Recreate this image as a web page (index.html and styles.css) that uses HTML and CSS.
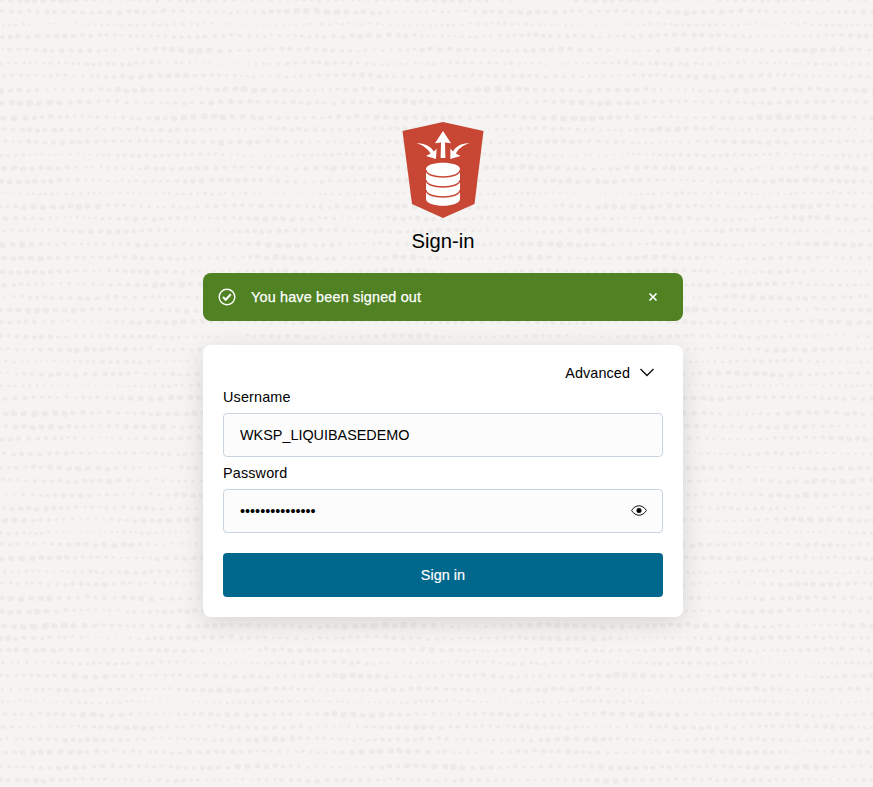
FILE: index.html
```html
<!DOCTYPE html>
<html lang="en">
<head>
<meta charset="utf-8">
<title>Sign-in</title>
<link rel="stylesheet" href="styles.css">
</head>
<body>
<svg class="texture" id="texture" width="873" height="787" aria-hidden="true"></svg>
<main class="login">
  <header class="brand">
    <svg class="logo" width="82" height="96" viewBox="0 0 82 96" aria-hidden="true">
      <path fill="#c74634" d="M41 0 81.5 9 72.5 82 41 96 10 82 .5 9Z"/>
      <g fill="#fff">
        <path d="M41 9 49 21.2 43 20.4 43.4 36H38.6L39 20.4 33 21.2Z"/>
        <path d="M14.5 21.2C22.5 20.6 29 24.5 32 29.5L34.6 26.5 34 37 24 34 28.6 31.6C26 27 21 23 14.5 21.2Z"/>
        <path d="M67.5 21.2C59.5 20.6 53.6 24.5 51 29.5L48.4 26.5 48.3 37 58.5 34 53.9 31.6C56 27 61 23 67.5 21.2Z"/>
        <path d="M24 47C24 38.5 58 38.5 58 47V77C58 86 24 86 24 77Z"/>
      </g>
      <path fill="none" stroke="#c74634" stroke-width="1.4" d="M24 48C24 57.3 58 57.3 58 48M24 58C24 67.3 58 67.3 58 58M24 68C24 77.3 58 77.3 58 68"/>
    </svg>
    <h1 class="title">Sign-in</h1>
  </header>
  <div class="alert">
    <svg class="alert-icon" width="18" height="18" viewBox="0 0 18 18" fill="none" stroke="#fff" aria-hidden="true">
      <circle cx="9" cy="9" r="7.8" stroke-width="1.4"/><path d="m5 9 2.7 2.7L12.8 6.3" stroke-width="2"/>
    </svg>
    <span class="alert-text">You have been signed out</span>
    <button class="close" aria-label="Close"><svg width="10" height="10" viewBox="0 0 10 10" fill="none" stroke="#fff" stroke-width="1.7"><path d="m1.5 1.5 7 7m0-7-7 7"/></svg></button>
  </div>
  <form class="card">
    <button type="button" class="advanced">Advanced
      <svg class="chevron" width="14" height="9" viewBox="0 0 14 9" fill="none" stroke="#111" stroke-width="1.4"><path d="m.5 1 6.5 6.5L13.5 1"/></svg>
    </button>
    <label class="label" for="user">Username</label>
    <div class="field"><input class="input" id="user" type="text" value="WKSP_LIQUIBASEDEMO"></div>
    <label class="label second" for="pass">Password</label>
    <div class="field">
      <input class="input secret" id="pass" type="password" value="aaaaaaaaaaaaaaa">
      <svg class="eye" width="16" height="11" viewBox="0 0 16 11" fill="none" stroke="#161513" aria-hidden="true"><path d="M.6 5.5C4.5-.8 11.5-.8 15.4 5.5 11.5 11.8 4.5 11.8.6 5.5Z"/><circle cx="8" cy="5.5" r="2.5" fill="#000" stroke="none"/></svg>
    </div>
    <button type="button" class="submit">Sign in</button>
  </form>
</main>
<script src="texture.js"></script>
</body>
</html>
```
FILE: styles.css
```css
* { box-sizing: border-box; }
body {
  margin: 0;
  height: 787px;
  overflow: hidden;
  background: #f5f4f2;
  color: #000;
  font: 14.4px/20px "Liberation Sans", Arial, sans-serif;
  letter-spacing: .15px;
}
button, input { font: inherit; letter-spacing: inherit; color: inherit; }
button { border: 0; padding: 0; background: none; }
svg { display: block; flex: none; }
.texture { position: absolute; inset: 0; z-index: -1; }
.login { width: 480px; margin: 0 0 0 203px; padding-top: 122px; }
.brand { display: flex; flex-direction: column; align-items: center; }
.title { margin: 8px 0 0; font-size: 20.2px; line-height: 30px; font-weight: 400; letter-spacing: 0; }
.alert {
  display: flex;
  align-items: center;
  height: 48px;
  margin-top: 17px;
  padding: 0 25px 0 15px;
  border-radius: 8px;
  background: #508223;
  color: #fff;
}
.alert-text { margin-left: 15px; flex: 1; letter-spacing: .18px; -webkit-text-stroke: .25px #fff; }
.card {
  display: flex;
  flex-direction: column;
  margin-top: 24px;
  height: 272px;
  padding: 18px 20px 20px;
  border-radius: 8px;
  background: #fff;
  box-shadow: 0 6px 24px rgba(0, 0, 0, .12);
}
.advanced { display: flex; align-items: center; align-self: flex-end; gap: 10px; margin-right: 9px; height: 20px; letter-spacing: .1px; }
.chevron { margin-top: -2px; }
.label { margin-top: 4px; height: 20px; }
.second { margin-top: 6px; }
.field {
  display: flex;
  align-items: center;
  height: 44px;
  margin-top: 6px;
  padding: 0 15px 0 16px;
  border: 1px solid #cbd5e0;
  border-radius: 4px;
  background: #fcfcfc;
}
.input { flex: 1; min-width: 0; padding: 0; border: 0; outline: 0; background: none; letter-spacing: 0; }
.eye { margin-top: -2px; }
.submit { height: 44px; margin-top: 20px; border-radius: 4px; background: #00688c; color: #fff; letter-spacing: .05px; -webkit-text-stroke: .2px #fff; }
```
FILE: texture.js
```js
// Rows of uneven dots: [baseline, size factor]
const rows = [[0,.9],[12,1],[24.5,.6],[36,.9],[50,1],[63.5,.75],[76,.9],[90,1.05],[102.5,1],[117.5,1.1],[129.5,.9],[142,.95],[155,.75],[168,1],[181,.95],[193.5,.6],[206.5,1],[218.5,.9],[231,.9],[244.5,1],
[258,1],[271.5,.9],[284.5,.95],[297.5,1],[310,1],[322,.95],[336.5,.85],[349.5,.95],[361.5,.75],[374,1],[385.5,.6],[398,1],[413.5,1.1],[426.5,1],[438.5,.9],[453.5,.8],[468,1],[481,1],[495,.95],[508,.85],
[520,1],[532.5,.6],[544.5,.95],[558,1],[572,.75],[584,.9],[598,1.05],[611,1],[626,1.1],[638,.9],[650,.95],[663,.75],[676,1],[689.5,.95],[702,.6],[714.5,1],[727,.9],[739.5,.9],[752,1],[767,1],[780,.9]];
let seed = 7;
const rand = () => (seed = (seed * 16807) % 2147483647) / 2147483647;
let path = "";
rows.forEach(([y, size]) => {
  const phase = rand() * 6.28;
  const drift = 19 + rand() * 12;
  let x = rand() * 6;
  while (x < 876) {
    const wave = .65 * Math.sin(x / drift + phase) + .35 * Math.sin(x / 47 + phase * 2);
    const rx = size * (2.1 + .9 * wave + rand() * .6);
    const ry = rx * (.72 + rand() * .2);
    const cy = y - .5 + Math.sin(x / 23 + phase) * .7 + rand() * 1.4 - .3;
    const tilt = Math.round(rand() * 60 - 30);
    path += `M${(x - rx).toFixed(1)} ${cy.toFixed(1)}a${rx.toFixed(1)} ${ry.toFixed(1)} ${tilt} 1 0 ${(2 * rx).toFixed(1)} 0a${rx.toFixed(1)} ${ry.toFixed(1)} ${tilt} 1 0 ${(-2 * rx).toFixed(1)} 0`;
    x += 2.3 + size * 2.6 + rx * .9 + rand() * 3;
  }
});
const dots = document.createElementNS("http://www.w3.org/2000/svg", "path");
dots.setAttribute("d", path);
dots.setAttribute("fill", "#ecebe9");
document.getElementById("texture").append(dots);
```
